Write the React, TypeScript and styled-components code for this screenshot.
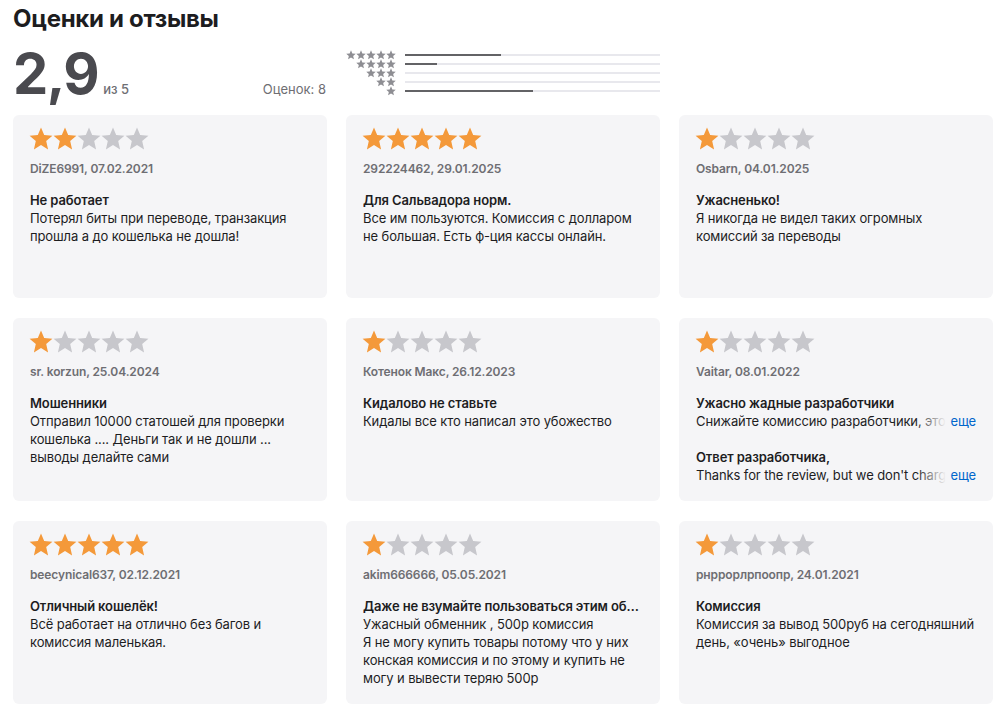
import React from "react";
import styled, { createGlobalStyle } from "styled-components";

const GlobalStyle = createGlobalStyle`
  html, body {
    margin: 0;
    padding: 0;
    background: #fff;
  }
  body {
    font-family: Inter, "Noto Sans", "Liberation Sans", sans-serif;
    color: #1d1d1f;
    -webkit-font-smoothing: antialiased;
  }
`;

interface Review {
  rating: number;
  author: string;
  date: string;
  title: string;
  body: string;
  truncated?: boolean;
  reply?: string;
}

const reviews: Review[] = [
  {
    rating: 2,
    author: "DiZE6991",
    date: "07.02.2021",
    title: "Не работает",
    body: "Потерял биты при переводе, транзакция прошла а до кошелька не дошла!",
  },
  {
    rating: 5,
    author: "292224462",
    date: "29.01.2025",
    title: "Для Сальвадора норм.",
    body: "Все им пользуются. Комиссия с долларом не большая. Есть ф-ция кассы онлайн.",
  },
  {
    rating: 1,
    author: "Osbarn",
    date: "04.01.2025",
    title: "Ужасненько!",
    body: "Я никогда не видел таких огромных комиссий за переводы",
  },
  {
    rating: 1,
    author: "sr. korzun",
    date: "25.04.2024",
    title: "Мошенники",
    body: "Отправил 10000 статошей для проверки кошелька .... Деньги так и не дошли ... выводы делайте сами",
  },
  {
    rating: 1,
    author: "Котенок Макс",
    date: "26.12.2023",
    title: "Кидалово не ставьте",
    body: "Кидалы все кто написал это убожество",
  },
  {
    rating: 1,
    author: "Vaitar",
    date: "08.01.2022",
    title: "Ужасно жадные разработчики",
    body: "Снижайте комиссию разработчики, это просто грабёж",
    truncated: true,
    reply: "Thanks for the review, but we don't charge any fees",
  },
  {
    rating: 5,
    author: "beecynical637",
    date: "02.12.2021",
    title: "Отличный кошелёк!",
    body: "Всё работает на отлично без багов и комиссия маленькая.",
  },
  {
    rating: 1,
    author: "akim666666",
    date: "05.05.2021",
    title: "Даже не взумайте пользоваться этим обменником",
    body: "Ужасный обменник , 500р комиссия\nЯ не могу купить товары потому что у них конская комиссия и по этому и купить не могу и вывести теряю 500р",
  },
  {
    rating: 1,
    author: "рнррорлрпоопр",
    date: "24.01.2021",
    title: "Комиссия",
    body: "Комиссия за вывод 500руб на сегодняшний день, «очень» выгодное",
  },
];

// count of ratings per star, 5 -> 1
const histogram = [3, 1, 0, 0, 4];
const totalRatings = 8;

const STAR_POINTS =
  "12,0.6 15.2,8.1 23.4,8.7 17.2,14.1 19.1,22.4 12,18 4.9,22.4 6.8,14.1 0.6,8.7 8.8,8.1";

const Star = ({ size, color }: { size: number; color: string }) => (
  <svg width={size} height={size} viewBox="0 0 24 24" aria-hidden>
    <polygon points={STAR_POINTS} fill={color} />
  </svg>
);

const StarRating = ({ value }: { value: number }) => (
  <Stars>
    {[1, 2, 3, 4, 5].map((i) => (
      <Star key={i} size={24} color={i <= value ? "#f4993a" : "#c7c7cc"} />
    ))}
  </Stars>
);

const ReviewCard = ({ review }: { review: Review }) => (
  <Card>
    <StarRating value={review.rating} />
    <Author>
      {review.author}, {review.date}
    </Author>
    <Title>{review.title}</Title>
    {review.truncated ? (
      <ClampLine>
        {review.body}
        <More>еще</More>
      </ClampLine>
    ) : (
      <Body>{review.body}</Body>
    )}
    {review.reply && (
      <Reply>
        <Title as="div">Ответ разработчика,</Title>
        <ClampLine>
          {review.reply}
          <More>еще</More>
        </ClampLine>
      </Reply>
    )}
  </Card>
);

export default function App() {
  return (
    <Page>
      <GlobalStyle />
      <Heading>Оценки и отзывы</Heading>
      <Summary>
        <Score>
          <Average>
            <Big>2,9</Big>
            <OutOf>из 5</OutOf>
          </Average>
          <Count>Оценок: {totalRatings}</Count>
        </Score>
        <Histogram>
          {histogram.map((n, idx) => {
            const stars = 5 - idx;
            return (
              <HistRow key={stars}>
                <MiniStars>
                  {Array.from({ length: stars }).map((_, i) => (
                    <Star key={i} size={10} color="#8e8e93" />
                  ))}
                </MiniStars>
                <Track>
                  <Fill style={{ width: `${(n / totalRatings) * 100}%` }} />
                </Track>
              </HistRow>
            );
          })}
        </Histogram>
      </Summary>
      <Grid>
        {reviews.map((r) => (
          <ReviewCard key={r.author + r.date} review={r} />
        ))}
      </Grid>
    </Page>
  );
}

const Page = styled.main`
  width: 980px;
  padding: 5px 12px 0 13px;
`;

const Heading = styled.h2`
  margin: 0;
  font-size: 24px;
  line-height: 28px;
  font-weight: 700;
  letter-spacing: -0.3px;
  color: #1d1d1f;
`;

const Summary = styled.section`
  display: grid;
  grid-template-columns: 314px 314px;
  column-gap: 19px;
  height: 72px;
  margin-top: 10px;
`;

const Score = styled.div`
  display: flex;
  align-items: baseline;
  justify-content: space-between;
  padding-top: 3px;
`;

const Average = styled.div`
  display: flex;
  align-items: baseline;
`;

const Big = styled.span`
  font-size: 56px;
  line-height: 56px;
  font-weight: 700;
  letter-spacing: -1.5px;
  color: #4a4a4f;
`;

const OutOf = styled.span`
  margin-left: 5px;
  font-size: 13px;
  font-weight: 500;
  color: #6e6e73;
`;

const Count = styled.span`
  font-size: 13px;
  color: #6e6e73;
  margin-right: 1px;
`;

const Histogram = styled.div`
  display: flex;
  flex-direction: column;
  padding-top: 7px;
`;

const HistRow = styled.div`
  display: flex;
  align-items: center;
  height: 9px;
`;

const MiniStars = styled.div`
  width: 50px;
  display: flex;
  justify-content: flex-end;
  flex-shrink: 0;
`;

const Track = styled.div`
  flex: 1;
  height: 2px;
  margin-left: 9px;
  background: #e8e8ed;
`;

const Fill = styled.div`
  height: 100%;
  background: #636366;
`;

const Grid = styled.div`
  display: grid;
  grid-template-columns: repeat(3, 314px);
  grid-auto-rows: 183px;
  column-gap: 19px;
  row-gap: 20px;
`;

const Card = styled.article`
  background: #f5f5f7;
  border-radius: 6px;
  padding: 12px 17px 0 17px;
  box-sizing: border-box;
  overflow: hidden;
  min-width: 0;
  letter-spacing: -0.12px;
`;

const Stars = styled.div`
  display: flex;
  height: 24px;
  margin-left: -1px;
`;

const Author = styled.div`
  margin-top: 10px;
  font-size: 12px;
  line-height: 16px;
  font-weight: 600;
  color: #6e6e73;
`;

const Title = styled.h3`
  margin: 14px 0 0;
  font-size: 13px;
  line-height: 18px;
  font-weight: 600;
  color: #1d1d1f;
  white-space: nowrap;
  overflow: hidden;
  text-overflow: ellipsis;
`;

const Body = styled.p`
  margin: 0;
  font-size: 13px;
  line-height: 18px;
  color: #1d1d1f;
  white-space: pre-line;
`;

const ClampLine = styled.p`
  position: relative;
  margin: 0;
  font-size: 13px;
  line-height: 18px;
  color: #1d1d1f;
  white-space: nowrap;
  overflow: hidden;
`;

const More = styled.span`
  position: absolute;
  right: 0;
  top: 0;
  padding-left: 34px;
  color: #0066cc;
  background: linear-gradient(to right, rgba(245, 245, 247, 0), #f5f5f7 30px);
`;

// its top margin collapses with the title's, so this sets the whole gap
const Reply = styled.div`
  margin-top: 18px;
`;
